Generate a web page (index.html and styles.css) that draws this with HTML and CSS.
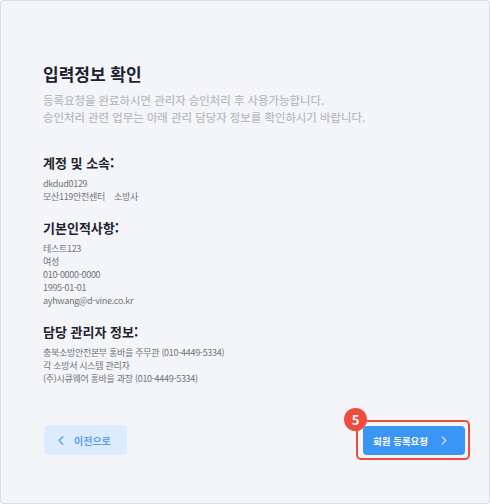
FILE: index.html
```html
<!DOCTYPE html>
<html lang="ko">
<head>
<meta charset="utf-8">
<link rel="stylesheet" href="styles.css">
</head>
<body>
<div class="page">
  <h1 class="title">입력정보 확인</h1>
  <p class="desc">등록요청을 완료하시면 관리자 승인처리 후 사용가능합니다.<br>승인처리 관련 업무는 아래 관리 담당자 정보를 확인하시기 바랍니다.</p>

  <section class="sec">
    <h2 class="sec-title">계정 및 소속:</h2>
    <div class="lines">
      <div>dkdud0129</div>
      <div>모산119안전센터<span class="rank">소방사</span></div>
    </div>
  </section>

  <section class="sec">
    <h2 class="sec-title">기본인적사항:</h2>
    <div class="lines">
      <div>테스트123</div>
      <div>여성</div>
      <div>010-0000-0000</div>
      <div>1995-01-01</div>
      <div>ayhwang@d-vine.co.kr</div>
    </div>
  </section>

  <section class="sec">
    <h2 class="sec-title">담당 관리자 정보:</h2>
    <div class="lines">
      <div>충북소방안전본부 홍바을 주무관 (010-4449-5334)</div>
      <div>각 소방서 시스템 관리자</div>
      <div>(주)시큐웨어 홍바을 과장 (010-4449-5334)</div>
    </div>
  </section>

  <div class="actions">
    <button class="btn btn-back" type="button">
      <svg class="ico" width="6" height="9" viewBox="0 0 6 9"><path d="M4.8 0.8 L1.2 4.5 L4.8 8.2" fill="none" stroke="#5c9ef3" stroke-width="1.3" stroke-linecap="round" stroke-linejoin="round"/></svg>
      <span>이전으로</span>
    </button>
    <div class="mark">
      <span class="badge">5</span>
      <button class="btn btn-primary" type="button">
        <span>회원 등록요청</span>
        <svg class="ico" width="6" height="9" viewBox="0 0 6 9"><path d="M1.2 0.8 L4.8 4.5 L1.2 8.2" fill="none" stroke="#d6e8fd" stroke-width="1.2" stroke-linecap="round" stroke-linejoin="round"/></svg>
      </button>
    </div>
  </div>
</div>
</body>
</html>
```

FILE: styles.css
```css
* { box-sizing: border-box; }
html, body { margin: 0; padding: 0; }
body {
  font-family: "Noto Sans CJK KR", "Noto Sans", sans-serif;
  background: #ffffff;
}
.page {
  width: 490px;
  height: 504px;
  border: 1px solid #dadde2;
  border-radius: 3px;
  background: #f4f5f9;
  padding: 62px 19px 0 42px;
}
.title {
  margin: 0;
  font-size: 17px;
  line-height: 22px;
  font-weight: 700;
  color: #1b2231;
}
.desc {
  margin: 7px 0 0;
  font-size: 11.4px;
  line-height: 17px;
  font-weight: 500;
  color: #b9bcc3;
}
.sec { margin-top: 16px; }
.sec:first-of-type { margin-top: 28px; }
.sec-title {
  margin: 0;
  font-size: 13px;
  line-height: 18px;
  font-weight: 700;
  color: #1e2330;
}
.lines {
  margin-top: 5px;
  font-size: 9px;
  line-height: 13px;
  color: #70727e;
  letter-spacing: -0.3px;
}
.rank { margin-left: 9px; }
.actions {
  margin-top: 35px;
  display: flex;
  justify-content: space-between;
  align-items: center;
}
.btn {
  border: 0;
  font-family: inherit;
  font-weight: 700;
  display: flex;
  align-items: center;
  border-radius: 5px;
  cursor: pointer;
}
.btn-back {
  width: 83px;
  height: 30px;
  padding: 0 0 0 14px;
  gap: 10px;
  background: #dcebfd;
  color: #5c9ef3;
  font-size: 10px;
  margin-left: 1px;
}
.mark {
  position: relative;
  border: 2px solid #f04b3e;
  border-radius: 5px;
  padding: 4px 3px 3px 5px;
}
.badge {
  position: absolute;
  left: -14px;
  top: -14px;
  width: 23px;
  height: 23px;
  border-radius: 50%;
  background: #f04b3e;
  color: #ffffff;
  font-size: 13px;
  font-weight: 700;
  line-height: 23px;
  text-align: center;
}
.btn-primary {
  width: 102px;
  height: 29px;
  padding: 0 0 0 10px;
  gap: 13px;
  background: #3b95f6;
  color: #ffffff;
  font-size: 9.5px;
  border-radius: 4px;
}
.ico { display: block; flex: none; }
```
